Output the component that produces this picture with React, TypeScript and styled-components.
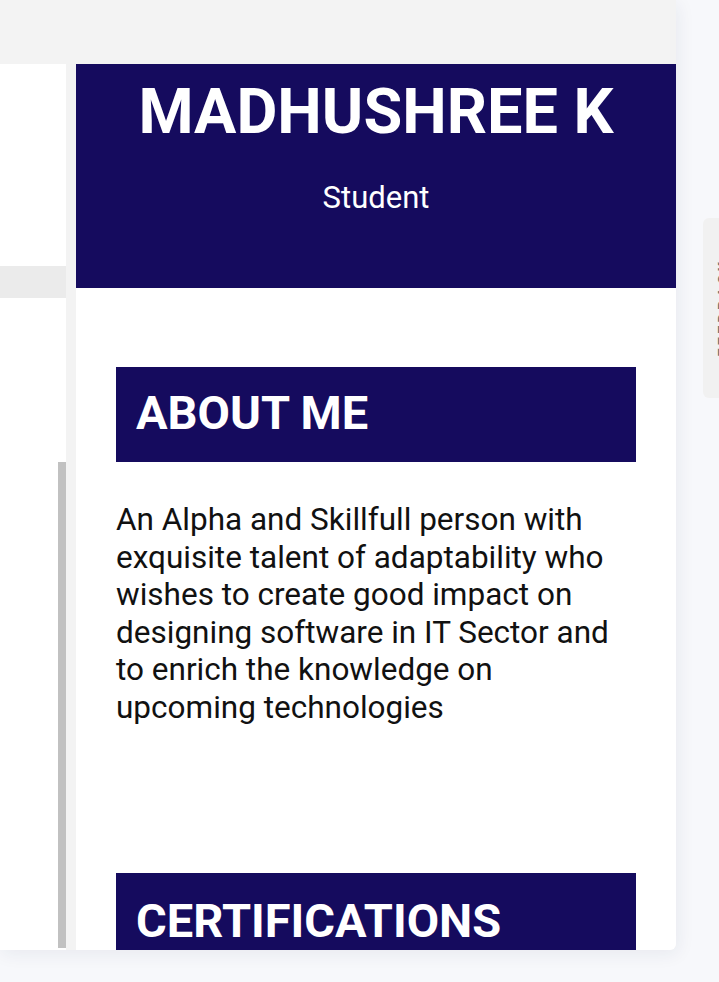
import styled, { createGlobalStyle } from "styled-components";

const GlobalStyle = createGlobalStyle`
    html, body {
        margin: 0;
        padding: 0;
        background: #f7f8fb;
        font-family: Roboto, "Liberation Sans", sans-serif;
        overflow: hidden;
    }
`

const NAVY = "#150b5e";

const App = () => {
    return (
        <Page>
            <GlobalStyle />
            <Panel>
                <TopBar />
                <Workspace>
                    <LeftPane>
                        <Band />
                        <ScrollThumb />
                    </LeftPane>
                    <Gutter />
                    <ResumeCard>
                        <Header>
                            <Name>MADHUSHREE K</Name>
                            <Role>Student</Role>
                        </Header>
                        <Body>
                            <SectionTitle>ABOUT ME</SectionTitle>
                            <About>
                                An Alpha and Skillfull person with exquisite talent of adaptability who
                                wishes to create good impact on designing software in IT Sector and to
                                enrich the knowledge on upcoming technologies
                            </About>
                            <SectionTitle spaced>CERTIFICATIONS</SectionTitle>
                        </Body>
                    </ResumeCard>
                </Workspace>
            </Panel>
            <FeedbackTab>
                <FeedbackLabel>FEEDBACK</FeedbackLabel>
            </FeedbackTab>
        </Page>
    )
}

const Page = styled.div`
    position: relative;
    width: 719px;
    height: 982px;
    overflow: hidden;
`

const Panel = styled.div`
    display: flex;
    flex-direction: column;
    width: 676px;
    height: 950px;
    background: #f3f3f3;
    border-bottom-right-radius: 6px;
    box-shadow: 2px 4px 18px rgba(30, 40, 90, 0.07);
    overflow: hidden;
`

const TopBar = styled.div`
    height: 64px;
    flex-shrink: 0;
    background: #f3f3f3;
`

const Workspace = styled.div`
    display: flex;
    flex: 1;
    min-height: 0;
`

const LeftPane = styled.div`
    width: 66px;
    flex-shrink: 0;
    display: flex;
    flex-direction: column;
    background: #ffffff;
`

const Band = styled.div`
    margin-top: 202px;
    height: 32px;
    background: #ebebeb;
`

const ScrollThumb = styled.div`
    align-self: flex-end;
    width: 8px;
    flex: 1;
    margin-top: 164px;
    margin-bottom: 2px;
    background: #c1c1c1;
`

const Gutter = styled.div`
    width: 10px;
    flex-shrink: 0;
    background: #f3f3f3;
`

const ResumeCard = styled.div`
    width: 600px;
    background: #ffffff;
    overflow: hidden;
`

const Header = styled.div`
    height: 224px;
    box-sizing: border-box;
    padding-top: 16px;
    background: ${NAVY};
    color: #ffffff;
    text-align: center;
`

const Name = styled.h1`
    margin: 0;
    font-size: 63px;
    line-height: 1;
    font-weight: 700;
`

const Role = styled.div`
    margin-top: 39px;
    font-size: 31px;
    line-height: 1;
`

const Body = styled.div`
    padding: 79px 40px 0 40px;
`

const SectionTitle = styled.h2<{ spaced?: boolean }>`
    display: flex;
    align-items: center;
    height: 95px;
    margin: ${props => props.spaced ? "147px 0 0 0" : "0"};
    padding: 0 0 ${props => props.spaced ? "0" : "4px"} 20px;
    box-sizing: border-box;
    background: ${NAVY};
    color: #ffffff;
    font-size: 47px;
    font-weight: 700;
`

const About = styled.p`
    margin: 39px 0 0 0;
    font-size: 31.5px;
    line-height: 37.5px;
    color: #111111;
`

const FeedbackTab = styled.div`
    position: absolute;
    top: 218px;
    left: 703px;
    width: 34px;
    height: 180px;
    box-sizing: border-box;
    padding-left: 12px;
    border-radius: 6px;
    background: #f1f1f1;
    display: flex;
    align-items: center;
`

const FeedbackLabel = styled.span`
    writing-mode: vertical-rl;
    transform: rotate(180deg);
    color: #6f6f6f;
    font-size: 15px;
    font-weight: 700;
    letter-spacing: 3px;
`

export default App;
